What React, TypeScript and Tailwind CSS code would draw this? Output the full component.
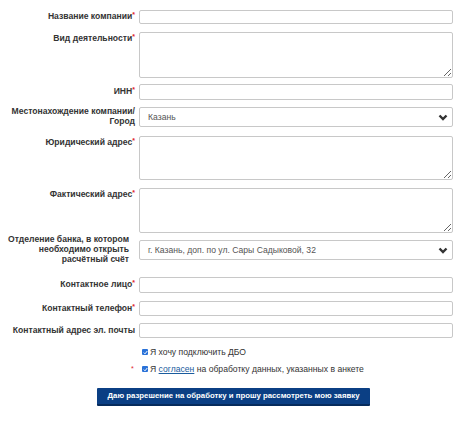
import { ReactNode } from 'react';

const font = { fontFamily: '"Liberation Sans", Arial, sans-serif' };

const Req = () => <span className="text-[#e0252b] text-[7px] align-top leading-none">*</span>;

const Row = ({ label, req, mt, h, top, children }: { label: ReactNode; req?: boolean; mt: string; h: string; top?: boolean; children: ReactNode }) => (
  <div className={`flex ${mt} ${h} ${top ? 'items-start' : 'items-center'}`}>
    <label className={`w-[136px] shrink-0 pr-[1px] text-right font-bold text-[8.6px] leading-[10px] text-[#333] ${top ? 'pt-[1px]' : 'pb-[2px]'}`}>
      {label}
      {req && <Req />}
    </label>
    <div className="ml-[3px] w-[314px] h-full">{children}</div>
  </div>
);

const Input = () => <input className="block w-full h-full border border-[#c8c8c8] rounded-[2px] bg-white outline-none" />;

const Area = () => <textarea className="block w-full h-full border border-[#c8c8c8] rounded-[2px] bg-white outline-none" />;

const Select = ({ value }: { value: string }) => (
  <div className="relative w-full h-full border border-[#c8c8c8] rounded-[2px] bg-white flex items-center pl-[8px] text-[8.6px] text-[#555]">
    {value}
    <svg className="absolute right-[4px] top-[6px]" width="10" height="7" viewBox="0 0 10 7">
      <polyline points="1.5,1.5 5,5 8.5,1.5" fill="none" stroke="#333" strokeWidth="2.4" />
    </svg>
  </div>
);

const Check = () => (
  <span className="inline-flex items-center justify-center w-[6px] h-[6px] bg-[#2a72d8] rounded-[1px] mr-[2px]">
    <svg width="5" height="5" viewBox="0 0 5 5">
      <polyline points="0.8,2.6 2,3.8 4.3,1" fill="none" stroke="#fff" strokeWidth="1" />
    </svg>
  </span>
);

export default function App() {
  return (
    <div className="w-[467px] h-[421px] bg-white" style={font}>
      <form className="flex flex-col">
        <Row label="Название компании" req mt="mt-[10px]" h="h-[14px]">
          <Input />
        </Row>
        <Row label="Вид деятельности" req mt="mt-[8px]" h="h-[46px]" top>
          <Area />
        </Row>
        <Row label="ИНН" req mt="mt-[6px]" h="h-[16px]">
          <Input />
        </Row>
        <Row label={<>Местонахождение компании/<br />Город</>} mt="mt-[7px]" h="h-[20px]">
          <Select value="Казань" />
        </Row>
        <Row label="Юридический адрес" req mt="mt-[9px]" h="h-[44px]" top>
          <Area />
        </Row>
        <Row label="Фактический адрес" req mt="mt-[8px]" h="h-[45px]" top>
          <Area />
        </Row>
        <Row
          label={<span className="inline-block pr-[6px]">Отделение банка, в котором<br />необходимо открыть<br />расчётный счёт</span>}
          mt="mt-[7px]"
          h="h-[20px]"
        >
          <Select value="г. Казань, доп. по ул. Сары Садыковой, 32" />
        </Row>
        <Row label="Контактное лицо" req mt="mt-[17px]" h="h-[16px]">
          <Input />
        </Row>
        <Row label="Контактный телефон" req mt="mt-[8px]" h="h-[15px]">
          <Input />
        </Row>
        <Row label="Контактный адрес эл. почты" mt="mt-[7px]" h="h-[15px]">
          <Input />
        </Row>

        <div className="mt-[9px] ml-[142px] flex items-center text-[8.6px] leading-[10px] text-[#333]">
          <Check />
          Я хочу подключить ДБО
        </div>
        <div className="mt-[7px] flex items-center text-[8.6px] leading-[10px] text-[#333]">
          <span className="w-[142px] pl-[131px] text-[#e0252b] text-[7px]">*</span>
          <Check />
          Я&nbsp;<a className="text-[#1a5c9e] underline">согласен</a>&nbsp;на обработку данных, указанных в анкете
        </div>

        <div className="mt-[14px] flex justify-center">
          <button
            type="button"
            className="w-[273px] h-[18px] bg-[#0b3f84] border-b-[2px] border-[#062b5c] rounded-[1px] text-white font-bold text-[7.8px] whitespace-nowrap"
          >
            Даю разрешение на обработку и прошу рассмотреть мою заявку
          </button>
        </div>
      </form>
    </div>
  );
}
